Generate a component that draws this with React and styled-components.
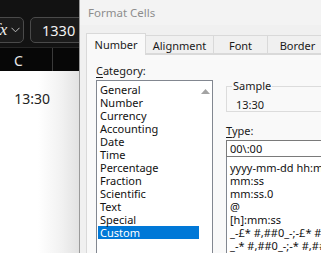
import React from 'react';
import styled, { createGlobalStyle } from 'styled-components';

const GlobalStyle = createGlobalStyle`
  html, body {
    margin: 0;
    padding: 0;
    width: 321px;
    height: 253px;
    overflow: hidden;
    background: #ffffff;
  }
  * {
    box-sizing: border-box;
  }
`;

const ui = `"Noto Sans", "Open Sans", sans-serif`;

const Screen = styled.div`
  display: flex;
  width: 321px;
  height: 253px;
  overflow: hidden;
  font-family: ${ui};
`;

/* ---------- spreadsheet behind the dialog ---------- */

const Sheet = styled.div`
  width: 80px;
  flex: none;
  display: flex;
  flex-direction: column;
  overflow: hidden;
  border-right: 1px solid #9a9a9a;
`;

const FormulaBar = styled.div`
  height: 48px;
  background: #121212;
  display: flex;
  gap: 6px;
  padding-top: 17px;
  margin-left: -20px;
  border-bottom: 1px solid #262626;
`;

const BarBox = styled.div`
  flex: none;
  width: ${(p) => p.$w}px;
  height: 26px;
  border: 1px solid #4a4a4a;
  border-radius: 5px;
  background: #1b1b1b;
  color: #f2f2f2;
  display: flex;
  align-items: center;
  gap: 4px;
  padding-left: ${(p) => p.$pad}px;
  font-size: 14.5px;
`;

const Fx = styled.span`
  font-family: "Liberation Serif", serif;
  font-style: italic;
  font-size: 17px;
`;

const HeaderRow = styled.div`
  height: 23px;
  background: #070707;
  display: flex;
`;

const ColHead = styled.div`
  width: 53px;
  flex: none;
  border-right: 1px solid #3a3a3a;
  color: #e8e8e8;
  font-size: 14px;
  display: flex;
  align-items: center;
  padding: 2px 0 0 14px;
`;

const Cells = styled.div`
  flex: 1;
  background: linear-gradient(to right, #ffffff 0px, #ffffff 38px, #f1f1f1 62px, #e2e2e2 79px);
  padding-top: 19px;
`;

const Cell = styled.div`
  width: 53px;
  text-align: right;
  padding-right: 3px;
  font-size: 14px;
  color: #222;
  line-height: 18px;
`;

/* ---------- Format Cells dialog ---------- */

const Dialog = styled.div`
  flex: 1;
  background: #f0f0f0;
  display: flex;
  flex-direction: column;
  min-width: 0;
`;

const TitleBar = styled.div`
  height: 25px;
  background: #f3f3f3;
  color: #8d8d8d;
  font-size: 11.5px;
  display: flex;
  align-items: center;
  padding-left: 8px;
`;

const Tabs = styled.div`
  display: flex;
  align-items: flex-end;
  height: 29px;
  padding-left: 6px;
  position: relative;
  z-index: 1;
`;

const Tab = styled.div`
  flex: none;
  width: ${(p) => p.$w}px;
  height: ${(p) => (p.$active ? 22 : 19)}px;
  margin-bottom: ${(p) => (p.$active ? -1 : 0)}px;
  background: ${(p) => (p.$active ? '#f9f9f9' : '#f0f0f0')};
  border: 1px solid #d9d9d9;
  border-bottom: ${(p) => (p.$active ? 'none' : '1px solid #d9d9d9')};
  border-left: ${(p) => (p.$first || p.$active ? '1px solid #d9d9d9' : 'none')};
  font-size: 11px;
  color: #1a1a1a;
  display: flex;
  align-items: center;
  justify-content: center;
  padding-top: ${(p) => (p.$active ? 0 : 1)}px;
`;

const Panel = styled.div`
  flex: 1;
  margin-left: 6px;
  background: #f9f9f9;
  border-left: 1px solid #d9d9d9;
  border-top: 1px solid #d9d9d9;
  display: flex;
  gap: 13px;
  padding: 8px 0 0 9px;
  min-height: 0;
`;

const CategoryCol = styled.div`
  width: 117px;
  flex: none;
  display: flex;
  flex-direction: column;
`;

const Label = styled.div`
  font-size: 11px;
  color: #1a1a1a;
  height: 17px;
  line-height: 16px;

  u {
    text-decoration: underline;
    text-underline-offset: 2px;
  }
`;

const ListBox = styled.div`
  flex: 1;
  background: #ffffff;
  border: 1px solid #828790;
  border-bottom: none;
  display: flex;
  padding: 2px 0 0 1px;
`;

const Items = styled.div`
  flex: 1;
`;

const Item = styled.div`
  height: 13px;
  line-height: 13px;
  font-size: 11px;
  padding-left: 2px;
  color: ${(p) => (p.$selected ? '#ffffff' : '#111')};
  background: ${(p) => (p.$selected ? '#0078d7' : 'transparent')};
`;

const ScrollBar = styled.div`
  width: 13px;
  flex: none;
  display: flex;
  justify-content: center;
  padding-top: 6px;
`;

const RightCol = styled.div`
  flex: 1;
  display: flex;
  flex-direction: column;
  min-width: 0;
  padding-top: 17px;
`;

const SampleBox = styled.fieldset`
  margin: 0;
  height: 32px;
  border: 1px solid #dcdcdc;
  border-right: none;
  padding: 0 0 0 9px;
  font-size: 11px;
  color: #1a1a1a;

  legend {
    padding: 0 1px;
    margin-left: -4px;
    line-height: 12px;
  }
`;

const SampleValue = styled.div`
  line-height: 14px;
  padding-top: 6px;
`;

const TypeLabel = styled(Label)`
  margin-top: 11px;
`;

const TypeInput = styled.div`
  height: 17px;
  background: #ffffff;
  border: 1px solid #7a7a7a;
  border-right: none;
  font-size: 11px;
  line-height: 15px;
  padding-left: 3px;
  color: #111;
`;

const FormatList = styled.div`
  flex: 1;
  background: #ffffff;
  border: 1px solid #828790;
  border-top: none;
  border-right: none;
  border-bottom: none;
  padding: 4px 0 0 3px;
`;

const FormatItem = styled.div`
  height: 13px;
  line-height: 13px;
  font-size: 11px;
  white-space: nowrap;
  color: #111;
`;

const categories = [
  'General',
  'Number',
  'Currency',
  'Accounting',
  'Date',
  'Time',
  'Percentage',
  'Fraction',
  'Scientific',
  'Text',
  'Special',
  'Custom',
];

const formats = [
  'yyyy-mm-dd hh:mm',
  'mm:ss',
  'mm:ss.0',
  '@',
  '[h]:mm:ss',
  '_-£* #,##0_-;-£* #,##0_-;_-£* "-"_-;_-@_-',
  '_-* #,##0_-;-* #,##0_-;_-* "-"_-;_-@_-',
];

export default function App() {
  return (
    <>
      <GlobalStyle />
      <Screen>
        <Sheet>
          <FormulaBar>
            <BarBox $w={44} $pad={14}>
              <Fx>fx</Fx>
              <svg width="9" height="6" viewBox="0 0 9 6">
                <path d="M0.5 0.8 L4.5 4.8 L8.5 0.8" fill="none" stroke="#bdbdbd" strokeWidth="1" />
              </svg>
            </BarBox>
            <BarBox $w={62} $pad={11}>1330</BarBox>
          </FormulaBar>
          <HeaderRow>
            <ColHead>C</ColHead>
          </HeaderRow>
          <Cells>
            <Cell>13:30</Cell>
          </Cells>
        </Sheet>

        <Dialog>
          <TitleBar>Format Cells</TitleBar>
          <Tabs>
            <Tab $w={60} $active $first>Number</Tab>
            <Tab $w={68}>Alignment</Tab>
            <Tab $w={54}>Font</Tab>
            <Tab $w={60}>Border</Tab>
          </Tabs>
          <Panel>
            <CategoryCol>
              <Label>
                <u>C</u>ategory:
              </Label>
              <ListBox>
                <Items>
                  {categories.map((c) => (
                    <Item key={c} $selected={c === 'Custom'}>
                      {c}
                    </Item>
                  ))}
                </Items>
                <ScrollBar>
                  <svg width="9" height="5" viewBox="0 0 9 5">
                    <path d="M0 5 L4.5 0 L9 5 Z" fill="#a3a3a3" />
                  </svg>
                </ScrollBar>
              </ListBox>
            </CategoryCol>
            <RightCol>
              <SampleBox>
                <legend>Sample</legend>
                <SampleValue>13:30</SampleValue>
              </SampleBox>
              <TypeLabel>
                <u>T</u>ype:
              </TypeLabel>
              <TypeInput>00\:00</TypeInput>
              <FormatList>
                {formats.map((f) => (
                  <FormatItem key={f}>{f}</FormatItem>
                ))}
              </FormatList>
            </RightCol>
          </Panel>
        </Dialog>
      </Screen>
    </>
  );
}
